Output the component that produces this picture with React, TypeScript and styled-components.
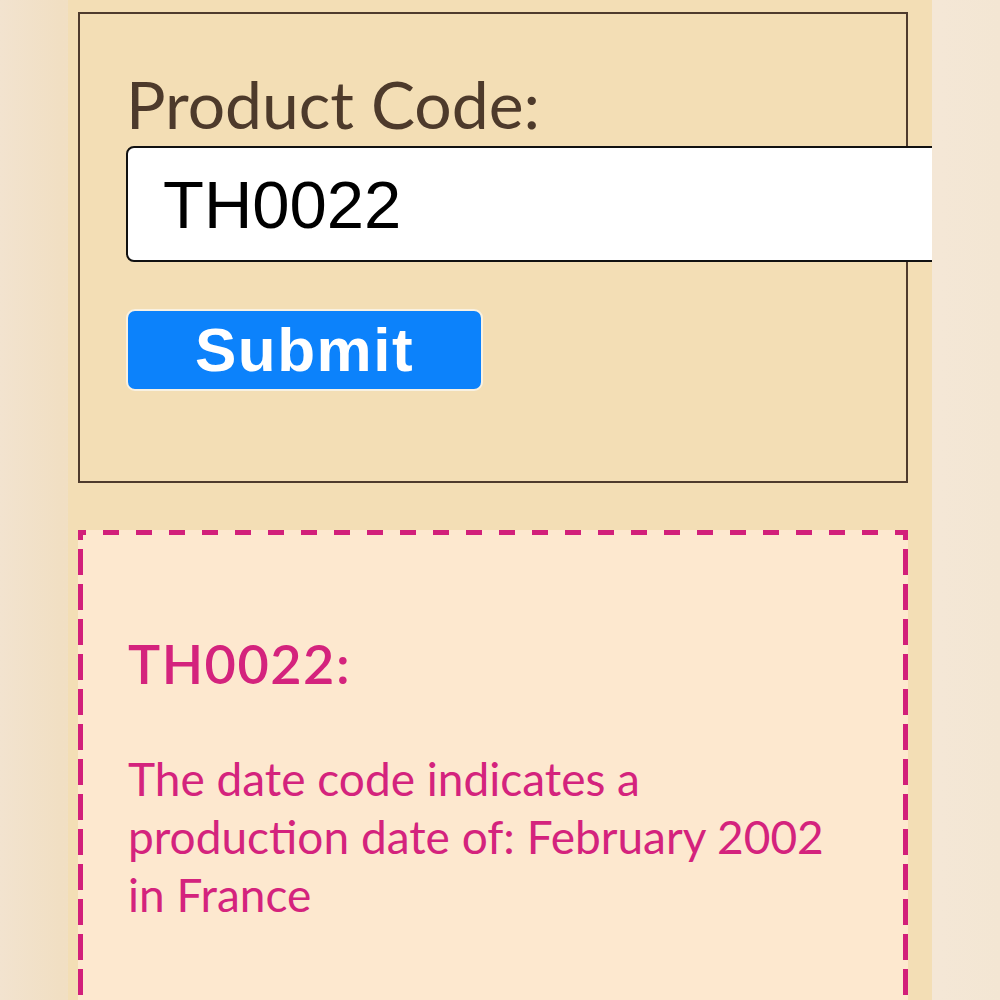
import React from 'react';
import styled, { createGlobalStyle } from 'styled-components';

const dash = '#d21f7a';

const GlobalStyle = createGlobalStyle`
  html, body {
    margin: 0;
    padding: 0;
    height: 100%;
  }
  body {
    background: linear-gradient(90deg, #f2e3cf 0%, #f1dfc3 6%, #f4e7d6 94%, #f3e6d3 100%);
    font-family: Lato, "Noto Sans", sans-serif;
    overflow: hidden;
  }
`;

const Column = styled.div`
  width: 864px;
  height: 1000px;
  margin: 0 auto;
  background: #f3deb5;
  padding: 12px 24px 0 10px;
  box-sizing: border-box;
  overflow: hidden;
  display: flex;
  flex-direction: column;
  gap: 47px;
`;

const FormBox = styled.form`
  border: 2px solid #4e3b2d;
  height: 471px;
  box-sizing: border-box;
  padding: 54px 0 0 46px;
  display: flex;
  flex-direction: column;
  align-items: flex-start;
`;

const Label = styled.label`
  font-size: 66px;
  line-height: 72px;
  color: #4d3a2b;
`;

const CodeInput = styled.input`
  margin-top: 6px;
  width: 830px;
  height: 116px;
  box-sizing: border-box;
  border: 2px solid #111;
  border-radius: 8px;
  background: #fff;
  padding: 0 0 0 35px;
  font-family: "Liberation Sans", Arial, sans-serif;
  font-size: 67px;
  color: #000;
  outline: none;
`;

const SubmitButton = styled.button`
  margin-top: 47px;
  width: 357px;
  height: 82px;
  box-sizing: border-box;
  border: 2px solid #f8f1e2;
  border-radius: 9px;
  background: #0c82fb;
  color: #fff;
  font-family: "Liberation Sans", Arial, sans-serif;
  font-weight: 700;
  font-size: 62px;
  letter-spacing: 1.5px;
  line-height: 1;
  padding: 0;
  cursor: pointer;
`;

const ResultBox = styled.section`
  flex: 1;
  padding: 104px 50px 0 50px;
  color: #d4237d;
  background:
    repeating-linear-gradient(90deg, ${dash} 0 8px, transparent 8px 25px, ${dash} 25px 33px) top left / 100% 5px no-repeat,
    repeating-linear-gradient(180deg, ${dash} 0 10px, transparent 10px 19px, ${dash} 19px 35px) top left / 5px 100% no-repeat,
    repeating-linear-gradient(180deg, ${dash} 0 10px, transparent 10px 19px, ${dash} 19px 35px) top right / 5px 100% no-repeat,
    #fde8cf;
`;

const ResultTitle = styled.h2`
  margin: 0;
  font-size: 54px;
  font-weight: 600;
  line-height: 60px;
  letter-spacing: 1.5px;
`;

const ResultText = styled.p`
  margin: 56px 0 0;
  font-size: 46px;
  line-height: 58px;
  font-weight: 400;
`;

export default function App() {
  return (
    <>
      <GlobalStyle />
      <Column>
        <FormBox onSubmit={(e) => e.preventDefault()}>
          <Label htmlFor="code">Product Code:</Label>
          <CodeInput id="code" defaultValue="TH0022" />
          <SubmitButton type="submit">Submit</SubmitButton>
        </FormBox>
        <ResultBox>
          <ResultTitle>TH0022:</ResultTitle>
          <ResultText>
            The date code indicates a production date of: February 2002 in France
          </ResultText>
        </ResultBox>
      </Column>
    </>
  );
}
